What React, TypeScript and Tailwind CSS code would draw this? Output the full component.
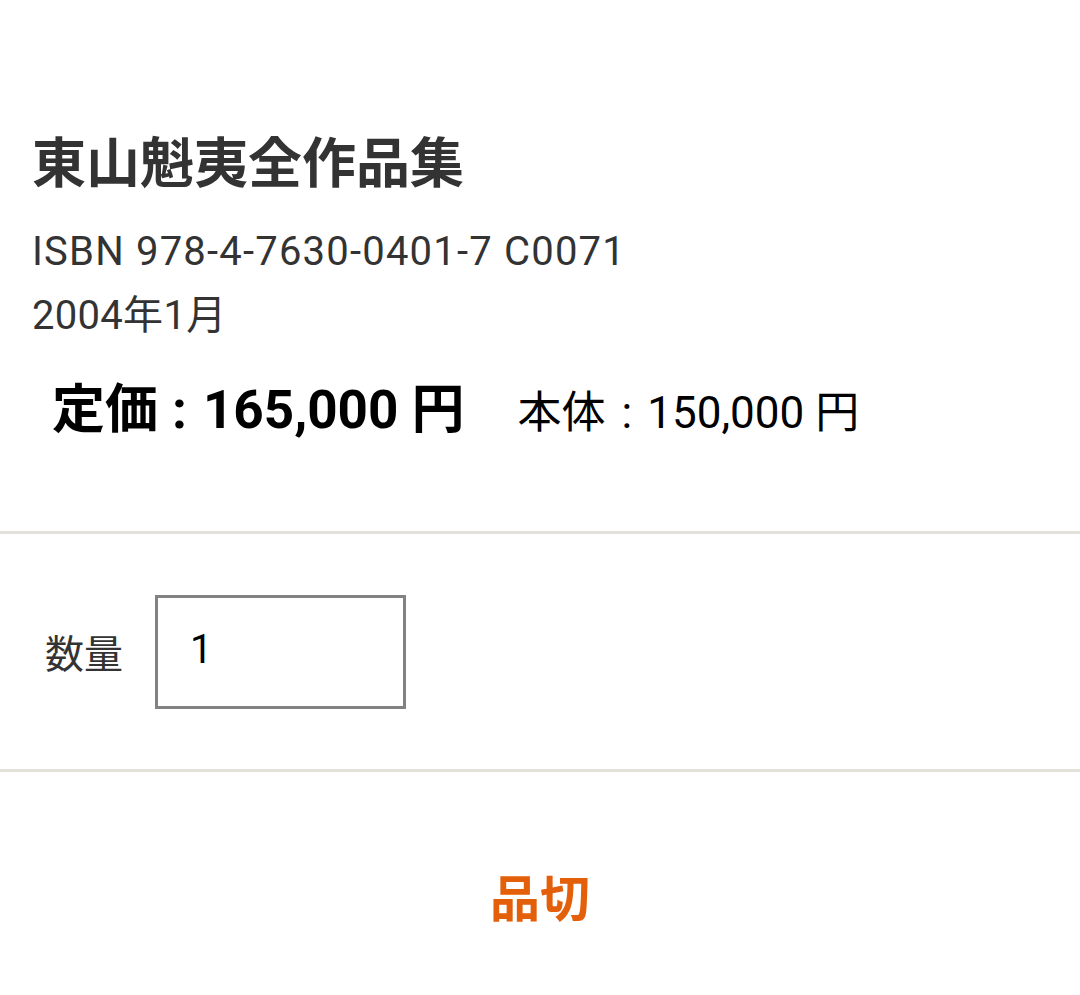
export default function App() {
  const font = { fontFamily: 'Roboto, "Noto Sans CJK JP", sans-serif' }
  return (
    <div className="w-[1080px] h-[995px] bg-white overflow-hidden" style={font}>
      <div className="pl-8 pt-[124px]">
        <h1 className="text-[54px] leading-[81px] font-bold text-[#333333]">東山魁夷全作品集</h1>
        <div className="mt-[15px] text-[40px] leading-[64px] text-[#333333]">
          <p className="tracking-[1.2px]">ISBN 978-4-7630-0401-7 C0071</p>
          <p className="tracking-[0.3px]">2004年1月</p>
        </div>
        <div className="mt-[22px] pl-5 flex items-baseline gap-[53px] text-black">
          <span className="text-[53px] leading-[80px] font-bold">
            定価<span className="ml-[14px] mr-[16px]">:</span>165,000 円
          </span>
          <span className="text-[44px] leading-[80px]">
            本体<span className="ml-[16px] mr-[15px]">:</span>150,000 円
          </span>
        </div>
      </div>

      <div className="mt-[78px] border-t-[3px] border-[#e2e2da]" />

      <div className="h-[235px] flex items-center pl-[45px] gap-8">
        <span className="text-[39px] text-[#333333] pt-[8px]">数量</span>
        <div className="w-[251px] h-[114px] border-[3px] border-[#828282] flex items-center pl-8 pb-1 text-[40px] text-black">
          1
        </div>
      </div>

      <div className="border-t-[3px] border-[#e2e2da]" />

      <div className="h-[262px] flex justify-center items-center">
        <span className="text-[50px] font-bold text-[#e35f0a] pb-[5px]">品切</span>
      </div>
    </div>
  )
}
